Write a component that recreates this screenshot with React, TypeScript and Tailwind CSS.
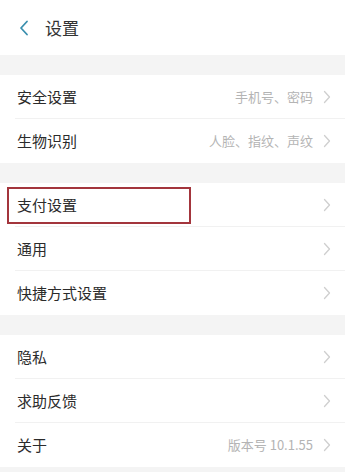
import React from 'react';

type Row = { label: string; value?: string; highlight?: boolean };

const GROUPS: Row[][] = [
  [
    { label: '安全设置', value: '手机号、密码' },
    { label: '生物识别', value: '人脸、指纹、声纹' },
  ],
  [
    { label: '支付设置', highlight: true },
    { label: '通用' },
    { label: '快捷方式设置' },
  ],
  [
    { label: '隐私' },
    { label: '求助反馈' },
    { label: '关于', value: '版本号 10.1.55' },
  ],
];

function Chevron() {
  return (
    <svg width="8" height="14" viewBox="0 0 8 14" fill="none" className="shrink-0">
      <path d="M1.5 1.5L6.5 7L1.5 12.5" stroke="#cfcfcf" strokeWidth="1.3" strokeLinecap="round" strokeLinejoin="round" />
    </svg>
  );
}

function SettingRow({ row, last }: { row: Row; last: boolean }) {
  return (
    <div className="relative h-[44px] flex items-center pl-[17px] pr-[14px]">
      {row.highlight && (
        <div className="absolute left-[7px] top-[4px] w-[184px] h-[37px] border-2 border-[#a3353c]" />
      )}
      <span className="text-[15px] text-[#2b2b2b]">{row.label}</span>
      <div className="ml-auto flex items-center gap-[10px]">
        {row.value && <span className="text-[13px] text-[#b4b4b4]">{row.value}</span>}
        <Chevron />
      </div>
      {!last && <div className="absolute left-[15px] right-0 bottom-0 h-px bg-[#f1f1f1]" />}
    </div>
  );
}

export default function App() {
  return (
    <div
      className="w-[348px] h-[472px] bg-white overflow-hidden flex"
      style={{ fontFamily: '"Noto Sans CJK SC", "Noto Sans", sans-serif' }}
    >
      <div className="w-[345px] flex flex-col">
        {/* Header */}
        <div className="h-[55px] flex items-center pl-[19px] gap-[16px]">
          <svg width="10" height="16" viewBox="0 0 10 16" fill="none">
            <path d="M8 1.5L2 8L8 14.5" stroke="#3a8fae" strokeWidth="1.8" strokeLinecap="round" strokeLinejoin="round" />
          </svg>
          <span className="text-[17px] text-[#333]">设置</span>
        </div>

        {GROUPS.map((group, gi) => (
          <div key={gi}>
            <div className="h-[20px] bg-[#f4f4f4]" />
            {group.map((row, ri) => (
              <SettingRow key={row.label} row={row} last={ri === group.length - 1} />
            ))}
          </div>
        ))}
        <div className="flex-1 bg-[#f4f4f4]" />
      </div>
      <div className="flex-1 bg-white" />
    </div>
  );
}
